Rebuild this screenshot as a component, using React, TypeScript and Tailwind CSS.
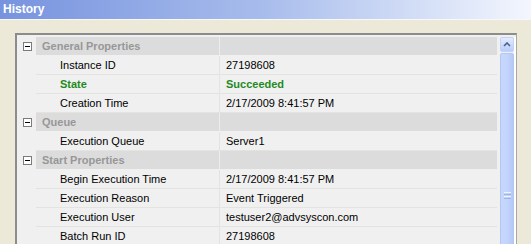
import React from 'react';

type Row =
  | { kind: 'cat'; label: string }
  | { kind: 'prop'; name: string; value: string; strong?: boolean };

const rows: Row[] = [
  { kind: 'cat', label: 'General Properties' },
  { kind: 'prop', name: 'Instance ID', value: '27198608' },
  { kind: 'prop', name: 'State', value: 'Succeeded', strong: true },
  { kind: 'prop', name: 'Creation Time', value: '2/17/2009 8:41:57 PM' },
  { kind: 'cat', label: 'Queue' },
  { kind: 'prop', name: 'Execution Queue', value: 'Server1' },
  { kind: 'cat', label: 'Start Properties' },
  { kind: 'prop', name: 'Begin Execution Time', value: '2/17/2009 8:41:57 PM' },
  { kind: 'prop', name: 'Execution Reason', value: 'Event Triggered' },
  { kind: 'prop', name: 'Execution User', value: 'testuser2@advsyscon.com' },
  { kind: 'prop', name: 'Batch Run ID', value: '27198608' },
];

const MinusBox: React.FC = () => (
  <div className="w-[9px] h-[9px] border border-[#7b7b7b] bg-white flex items-center justify-center">
    <div className="w-[5px] h-px bg-black" />
  </div>
);

const CategoryRow: React.FC<{ label: string }> = ({ label }) => (
  <div className="flex h-[19px] border-b border-[#f0f0f0]">
    <div className="w-[19px] flex items-center justify-center pl-[1px]">
      <MinusBox />
    </div>
    <div className="flex flex-1 bg-[#dcdcdc]">
      <div className="w-[183px] pl-[6px] leading-[18px] font-bold text-[#979797]">{label}</div>
      <div className="w-px bg-[#ececec]" />
      <div className="flex-1" />
    </div>
  </div>
);

const PropRow: React.FC<{ name: string; value: string; strong?: boolean }> = ({ name, value, strong }) => (
  <div className="flex h-[19px]">
    <div className="w-[19px]" />
    <div className={`flex flex-1 border-b border-[#e3e3df] ${strong ? 'font-bold text-[#1f8a1f]' : 'text-black'}`}>
      <div className="w-[183px] pl-[24px] leading-[18px] whitespace-nowrap">{name}</div>
      <div className="w-px bg-[#e3e3df]" />
      <div className="flex-1 pl-[6px] leading-[18px] whitespace-nowrap">{value}</div>
    </div>
  </div>
);

const ScrollBar: React.FC = () => (
  <div className="w-[14px] flex flex-col gap-px">
    <div className="h-[15px] rounded-[2px] border border-[#c3d3f7] bg-gradient-to-b from-[#e3ebfe] to-[#b9cdfa] flex items-center justify-center">
      <svg width="8" height="5" viewBox="0 0 8 5">
        <path d="M1 4 L4 1 L7 4" stroke="#4d6185" strokeWidth="1.6" fill="none" />
      </svg>
    </div>
    <div className="h-[290px] rounded-[2px] border border-[#b3c7f3] bg-gradient-to-r from-[#c6d6fc] via-[#c4d5fc] to-[#b3c8f6] flex flex-col items-center pt-[138px]">
      <div className="flex flex-col gap-px">
        <div className="w-[7px] h-px bg-[#eef3fe]" />
        <div className="w-[7px] h-px bg-[#9db4e8]" />
        <div className="w-[7px] h-px bg-[#eef3fe]" />
        <div className="w-[7px] h-px bg-[#9db4e8]" />
      </div>
    </div>
  </div>
);

export default function App() {
  return (
    <div className="w-[531px] h-[244px] overflow-hidden bg-[#ece9d8] text-[11px] font-['Liberation_Sans',Arial,sans-serif]">
      <div className="h-[20px] border-b border-[#f8f8fb] bg-gradient-to-r from-[#7793de] via-[#a9bdec] to-[#f3f6fd] pl-[3px] leading-[19px] text-[12px] font-bold text-white">
        History
      </div>
      <div className="pt-[13px] pl-[15px] pr-[14px]">
        <div className="flex border-t-2 border-l-2 border-r border-t-[#8c8c8c] border-l-[#8c8c8c] border-r-[#a8a8a8] bg-[#f0f0f0] pt-[2px]">
          <div className="w-[480px] flex flex-col">
            {rows.map((r, i) =>
              r.kind === 'cat' ? (
                <CategoryRow key={i} label={r.label} />
              ) : (
                <PropRow key={i} name={r.name} value={r.value} strong={r.strong} />
              )
            )}
          </div>
          <div className="w-[3px]" />
          <ScrollBar />
          <div className="w-[2px] bg-white" />
        </div>
      </div>
    </div>
  );
}
